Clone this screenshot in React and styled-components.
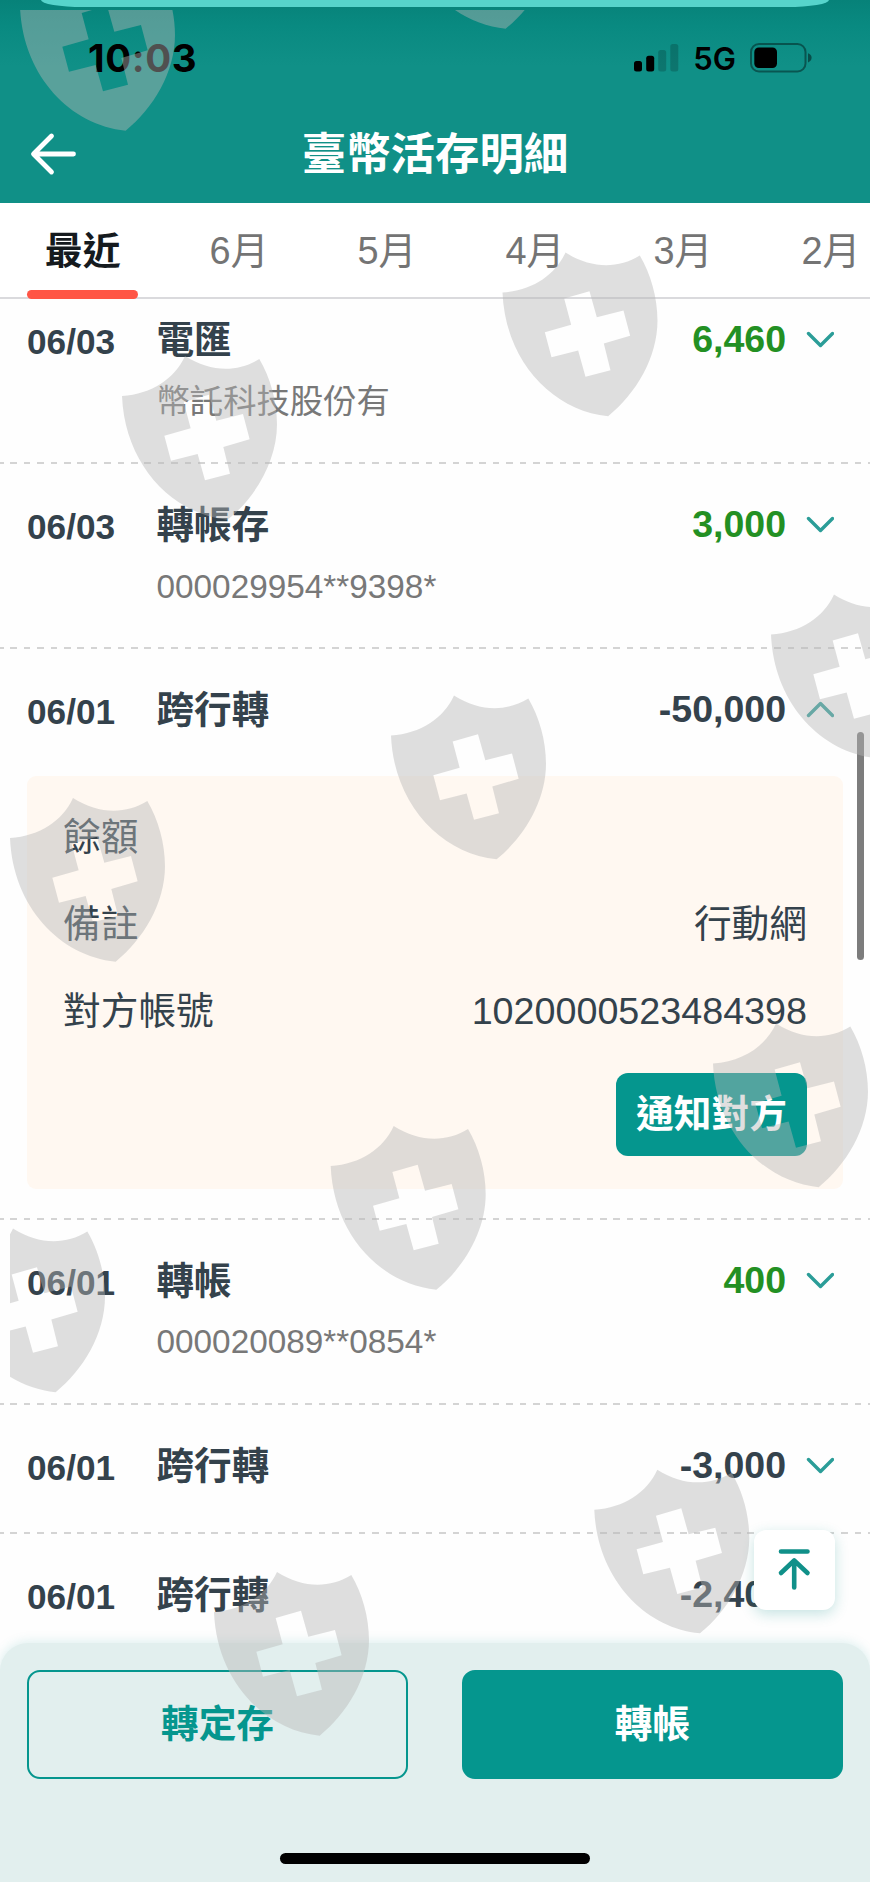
import React from "react";
import styled, { createGlobalStyle, css } from "styled-components";

const teal = "#05968e";
const ink = "#34424c";
const fontStack = '"Liberation Sans", "Noto Sans CJK TC", sans-serif';

const GlobalStyle = createGlobalStyle`
  * { box-sizing: border-box; }
  body { margin: 0; background: #fff; font-family: ${fontStack}; }
  button { font-family: inherit; cursor: pointer; }
`;

const Screen = styled.div`
  position: relative;
  display: flex;
  flex-direction: column;
  width: 870px;
  height: 1882px;
  overflow: hidden;
  background: #fefefe;
`;

const Header = styled.header`
  position: relative;
  z-index: 2;
  flex: none;
  display: flex;
  flex-direction: column;
  height: 203px;
  background: linear-gradient(#078279 0, #098a81 26px, #109087 66px, #109087 100%);
`;

const PreviousCard = styled.div`
  height: 7px;
  margin: 0 41px;
  background: #56d4cb;
  border-radius: 0 0 42px 42px / 0 0 7px 7px;
`;

const StatusBar = styled.div`
  display: flex;
  align-items: center;
  height: 100px;
  padding: 2px 58px 0 88px;
`;

const Clock = styled.span`
  flex: 1;
  font: 700 38.5px Inter, sans-serif;
  letter-spacing: 0.6px;
  color: #000;
`;

const Network = styled.span`
  margin: 0 14px 0 14px;
  font: 600 31px Inter, sans-serif;
  color: #000;
`;

const TitleBar = styled.div`
  display: grid;
  grid-template-columns: 90px 1fr 90px;
  align-items: center;
  height: 94px;
`;

const BackButton = styled.button`
  display: flex;
  padding: 0 0 0 30px;
  border: 0;
  background: none;
`;

const Title = styled.h1`
  margin: 0;
  padding-top: 2px;
  text-align: center;
  font-size: 44.4px;
  line-height: 60px;
  font-weight: 700;
  color: #fff;
`;

const Tabs = styled.nav`
  position: relative;
  z-index: 2;
  flex: none;
  display: flex;
  gap: 53.4px;
  height: 96px;
  padding-left: 27px;
  background: #fff;
  border-bottom: 2px solid #dadadd;
`;

const Tab = styled.button`
  position: relative;
  flex: none;
  height: 96px;
  padding: 0 17.8px 1px;
  border: 0;
  background: none;
  white-space: nowrap;
  font-size: 37.9px;
  line-height: 94px;
  color: #747474;
  ${({ $active }) =>
    $active &&
    css`
      font-weight: 700;
      color: #151a1e;
      &::after {
        content: "";
        position: absolute;
        left: 0;
        right: 0;
        bottom: 0;
        height: 9px;
        border-radius: 5px;
        background: #ff5545;
      }
    `}
`;

const List = styled.main`
  flex: 1;
  min-height: 0;
  margin-top: -19.7px;
`;

const Entry = styled.section`
  display: flex;
  flex-direction: column;
  padding-top: 33px;
`;

const EntryHead = styled.div`
  display: flex;
  align-items: flex-start;
  padding: 0 36px 0 27px;
  height: ${({ $tall }) => ($tall ? "149.7px" : "94px")};
`;

const DateText = styled.span`
  width: 129.5px;
  padding-top: 2px;
  font-size: 35.2px;
  line-height: 56px;
  font-weight: 700;
  color: ${ink};
`;

const Description = styled.div`
  flex: 1;
`;

const Kind = styled.div`
  font-size: 37.6px;
  line-height: 56px;
  font-weight: 700;
  color: ${ink};
`;

const Counterparty = styled.div`
  margin-top: 10.5px;
  font-size: 33.35px;
  line-height: 46px;
  color: #787878;
`;

const Amount = styled.span`
  margin-right: 20px;
  font-size: 37.5px;
  line-height: 55px;
  font-weight: 700;
  color: ${({ $income }) => ($income ? "#239023" : ink)};
`;

const Toggle = styled.svg`
  flex: none;
  width: 28px;
  height: 56px;
  fill: none;
  stroke: #2b9d98;
  stroke-width: 3.4;
  stroke-linecap: round;
  stroke-linejoin: round;
`;

const Divider = styled.div`
  height: 2px;
  background: repeating-linear-gradient(90deg, #d4d4d4 0 6.7px, transparent 6.7px 13.4px) -3px 0 / 900px 2px;
`;

const Detail = styled.div`
  display: flex;
  flex-direction: column;
  height: 413px;
  margin: 0.7px 27px 28.6px;
  padding: 17.5px 36px 0;
  border-radius: 9px;
  background: #fff8f1;
`;

const DetailRow = styled.div`
  display: flex;
  justify-content: space-between;
  height: 87px;
  font-size: 37.7px;
  line-height: 87px;
  color: ${ink};
`;

const NotifyButton = styled.button`
  align-self: flex-end;
  width: 191px;
  height: 83px;
  margin-top: 18px;
  padding: 0;
  border: 0;
  border-radius: 12px;
  background: ${teal};
  color: #fff;
  font-size: 37.7px;
  line-height: 83px;
  font-weight: 700;
`;

const ScrollThumb = styled.div`
  position: absolute;
  z-index: 3;
  right: 6.5px;
  top: 732px;
  width: 6.6px;
  height: 228px;
  border-radius: 4px;
  background: #7c7c7c;
`;

const TopButton = styled.button`
  position: absolute;
  z-index: 5;
  right: 35.5px;
  bottom: 272px;
  width: 80.5px;
  height: 80px;
  padding: 0;
  border: 0;
  border-radius: 12px;
  background: #fff;
  box-shadow: 0 4px 14px rgba(16, 144, 138, 0.24);
`;

const Sheet = styled.footer`
  position: relative;
  z-index: 4;
  flex: none;
  display: flex;
  flex-direction: column;
  align-items: center;
  justify-content: space-between;
  height: 239px;
  padding: 27px 27px 18px;
  border-radius: 28px 28px 0 0;
  background: #e2efee;
  box-shadow: 0 -1px 12px rgba(16, 144, 138, 0.15);
`;

const Actions = styled.div`
  display: grid;
  grid-template-columns: 1fr 1fr;
  gap: 54px;
  width: 100%;
`;

const ActionButton = styled.button`
  height: 109px;
  padding: 0;
  border: 2px solid ${teal};
  border-radius: 13px;
  background: ${({ $filled }) => ($filled ? teal : "transparent")};
  color: ${({ $filled }) => ($filled ? "#fff" : teal)};
  font-size: 37.7px;
  line-height: 105px;
  font-weight: 700;
`;

const HomeIndicator = styled.div`
  width: 310px;
  height: 11px;
  border-radius: 6px;
  background: #000;
`;

const Watermark = styled.svg`
  position: absolute;
  z-index: 6;
  inset: 0;
  pointer-events: none;
  fill: rgba(182, 182, 182, 0.44);
`;

const shieldPath =
  "M0 120C90 114 158 68 189 0C265 48 345 50 412 9C445 65 465 135 465 205C465 315 400 425 317 491C150 475 8 325 0 120Z" +
  "M185 138L206 217L127 239L147 314L227 294L249 373L324 353L304 273L383 250L363 174L283 194L261 116Z";

const shields = [
  [20, -33], [400, -135], [502.5, 252.5], [122, 356], [771, 594.5], [391, 695.5],
  [10, 798], [713, 1023.5], [330.7, 1126], [-50, 1228.5], [594.3, 1469.7], [214, 1572],
];

const months = ["最近", "6月", "5月", "4月", "3月", "2月"];

const entries = [
  { date: "06/03", kind: "電匯", note: "幣託科技股份有", amount: "6,460", income: true },
  { date: "06/03", kind: "轉帳存", note: "000029954**9398*", amount: "3,000", income: true },
  { date: "06/01", kind: "跨行轉", amount: "-50,000", open: true },
  { date: "06/01", kind: "轉帳", note: "000020089**0854*", amount: "400", income: true },
  { date: "06/01", kind: "跨行轉", amount: "-3,000" },
  { date: "06/01", kind: "跨行轉", amount: "-2,400" },
];

function Signal() {
  return (
    <svg width="45" height="30" viewBox="0 0 45 30">
      <rect x="0" y="18" width="8" height="10.5" rx="2.5" />
      <rect x="12.2" y="12.7" width="8" height="15.8" rx="2.5" />
      <g opacity="0.18">
        <rect x="24.2" y="7" width="8" height="21.5" rx="2.5" />
        <rect x="36.3" y="1" width="8" height="27.5" rx="2.5" />
      </g>
    </svg>
  );
}

function Battery() {
  return (
    <svg width="62" height="30" viewBox="0 0 62 30">
      <rect x="1" y="1" width="54.5" height="27.5" rx="8" fill="none" stroke="#000" strokeOpacity="0.4" strokeWidth="2" />
      <rect x="4.3" y="4.5" width="22.7" height="20.5" rx="4.5" />
      <path d="M58 10.2Q61.6 11.6 61.6 14.8Q61.6 18 58 19.4Z" fillOpacity="0.45" />
    </svg>
  );
}

function EntryRow({ item, last }) {
  return (
    <>
      <Entry>
        <EntryHead $tall={Boolean(item.note)}>
          <DateText>{item.date}</DateText>
          <Description>
            <Kind>{item.kind}</Kind>
            {item.note && <Counterparty>{item.note}</Counterparty>}
          </Description>
          <Amount $income={item.income}>{item.amount}</Amount>
          <Toggle viewBox="0 0 28 56">
            <path d={item.open ? "M2.5 33.5L14.5 21.5L26.5 33.5" : "M2.5 21.5L14.5 33.5L26.5 21.5"} />
          </Toggle>
        </EntryHead>
        {item.open && (
          <Detail>
            <DetailRow><span>餘額</span></DetailRow>
            <DetailRow><span>備註</span><span>行動網</span></DetailRow>
            <DetailRow><span>對方帳號</span><span>1020000523484398</span></DetailRow>
            <NotifyButton>通知對方</NotifyButton>
          </Detail>
        )}
      </Entry>
      {!last && <Divider />}
    </>
  );
}

export default function App() {
  return (
    <>
      <GlobalStyle />
      <Screen>
        <Header>
          <PreviousCard />
          <StatusBar>
            <Clock>10:03</Clock>
            <Signal />
            <Network>5G</Network>
            <Battery />
          </StatusBar>
          <TitleBar>
            <BackButton aria-label="返回">
              <svg width="48" height="44" viewBox="0 0 48 44" fill="none" stroke="#fff" strokeWidth="4.8" strokeLinecap="round" strokeLinejoin="round">
                <path d="M43.5 22H4M21.5 4L3.5 22L21.5 40" />
              </svg>
            </BackButton>
            <Title>臺幣活存明細</Title>
          </TitleBar>
        </Header>
        <Tabs>
          {months.map((m, i) => (
            <Tab key={m} $active={i === 0}>{m}</Tab>
          ))}
        </Tabs>
        <List>
          {entries.map((item, i) => (
            <EntryRow key={i} item={item} last={i === entries.length - 1} />
          ))}
        </List>
        <ScrollThumb />
        <Sheet>
          <Actions>
            <ActionButton>轉定存</ActionButton>
            <ActionButton $filled>轉帳</ActionButton>
          </Actions>
          <HomeIndicator />
        </Sheet>
        <TopButton aria-label="回到頂端">
          <svg width="80" height="80" viewBox="0 0 80 80" fill="none" stroke="#109089" strokeWidth="4.6" strokeLinecap="round" strokeLinejoin="round">
            <path d="M27 21.5H53.5M40.2 57.5V31M27 43L40.2 30.5L53.5 43" />
          </svg>
        </TopButton>
        <Watermark width="870" height="1882" viewBox="0 0 870 1882">
          <clipPath id="safe"><rect x="10" y="10" width="860" height="1872" /></clipPath>
          <g clipPath="url(#safe)">
            {shields.map(([x, y]) => (
              <path key={`${x}-${y}`} d={shieldPath} fillRule="evenodd" transform={`translate(${x} ${y}) scale(0.3333)`} />
            ))}
          </g>
        </Watermark>
      </Screen>
    </>
  );
}
